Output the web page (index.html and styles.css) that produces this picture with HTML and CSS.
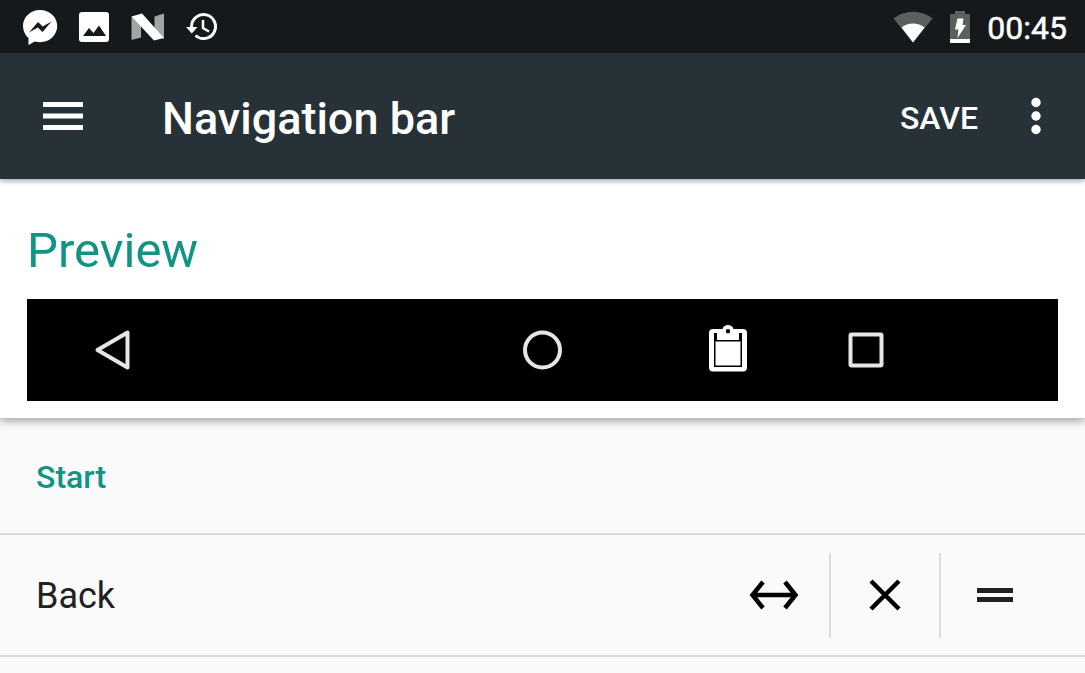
FILE: index.html
```
<!DOCTYPE html>
<html lang="en">
<head>
<meta charset="utf-8">
<meta name="viewport" content="width=device-width, initial-scale=1">
<title>Navigation bar</title>
<link rel="stylesheet" href="styles.css">
</head>
<body>
<div class="status-bar">
  <div class="notifications">
    <svg class="status-icon" viewBox="0 0 36 36" aria-hidden="true">
      <path fill="#fff" d="M18 1C8.300 1 1 8 1 17c0 5 2.200 9.200 5.500 12V36l6.300-3.500c1.700.5 3.400.7 5.200.7 9.700 0 17.200-7.200 17.200-16.200S27.700 1 18 1z"/>
      <path fill="#15191c" d="M7 23.500l9-10.500 4.700 4.500 8.800-5-9 10.500-4.700-4.500z"/>
    </svg>
    <svg class="status-icon" viewBox="0 0 36 36" aria-hidden="true">
      <rect x="3" y="3" width="30" height="30" rx="3" fill="#fff"/>
      <path fill="#15191c" d="M7 27l6-8 4.500 5 5.500-7.500L30 27z"/>
    </svg>
    <svg class="status-icon" viewBox="0 0 36 36" aria-hidden="true">
      <path fill="#a2a5a6" d="M1.500 7.500L11 13v15.500L1.500 31zM34 4.500V30l-9.500-7V7.500z"/>
      <path fill="#fff" d="M1.500 7.500L12 4.500l22 24.500-10 2.500z"/>
    </svg>
    <svg class="status-icon" viewBox="0 0 36 36" aria-hidden="true">
      <path fill="none" stroke="#fff" stroke-width="3" d="M7.500 19V17.500A12 12 0 1 1 11.500 26.500"/>
      <path fill="#fff" d="M2 18h11.500L7.800 24.500z"/>
      <path fill="none" stroke="#fff" stroke-width="2.500" d="M19 11v8l6 3.500"/>
    </svg>
  </div>
  <div class="system">
    <svg class="wifi" viewBox="0 0 40 32" aria-hidden="true">
      <path fill="#5c5f60" d="M20 31.500L.5 7.500C12-1.500 28-1.500 39.500 7.500z"/>
      <path fill="#fff" d="M20 31.500L8.500 16.500c6.500-5.500 16.500-5.500 23 0z"/>
    </svg>
    <svg class="battery" viewBox="0 0 22 32" aria-hidden="true">
      <path fill="#5c5f60" d="M6 0h10v3h5v25H1V3h5z"/>
      <path fill="#fff" d="M1 28h20v4H1zM8.500 7.500h6l-1 6.500H17L8.500 27l1-8.500H6z"/>
    </svg>
    <time class="clock">00:45</time>
  </div>
</div>

<header class="app-bar">
  <button class="menu-button" type="button" aria-label="Open menu">
    <svg width="40" height="28" viewBox="0 0 40 28" fill="#fff" aria-hidden="true"><path d="M0 0h40v5H0zM0 11.500h40v5H0zM0 23h40v5H0z"/></svg>
  </button>
  <h1 class="title">Navigation bar</h1>
  <button class="save" type="button">SAVE</button>
  <button class="overflow" type="button" aria-label="More options">
    <svg width="10" height="38" viewBox="0 0 10 38" fill="#fff" aria-hidden="true"><circle cx="5" cy="5.500" r="4.700"/><circle cx="5" cy="19" r="4.700"/><circle cx="5" cy="32.500" r="4.700"/></svg>
  </button>
</header>

<main>
  <section class="preview">
    <h2 class="preview-title">Preview</h2>
    <div class="nav-preview">
      <div class="nav-start">
        <span class="nav-key"><svg width="40" height="44" viewBox="0 0 40 44" aria-hidden="true"><path d="M34.500 4.500v35L4.500 22z" fill="none" stroke="#e6e6e6" stroke-width="4" stroke-linejoin="round"/></svg></span>
      </div>
      <span class="nav-key"><svg width="40" height="40" viewBox="0 0 40 40" aria-hidden="true"><circle cx="19.500" cy="20" r="17.500" fill="none" stroke="#e6e6e6" stroke-width="4"/></svg></span>
      <div class="nav-end">
        <span class="nav-key"><svg width="38" height="52" viewBox="0 0 38 52" aria-hidden="true">
          <path fill="#fff" fill-rule="evenodd" d="M4 5h9.500C14.500 2 16.500 1 19 1s4.500 1 5.500 4H34q4 0 4 4v34.500q0 4-4 4H4q-4 0-4-4V9q0-4 4-4zM5 9v34h28V9h-3v7H8V9zM19 5a2.200 2.200 0 1 0 0 4.400A2.200 2.200 0 0 0 19 5z"/>
          <path fill="#fff" d="M6.500 17.500h25v24h-25z"/>
        </svg></span>
        <span class="nav-key"><svg width="36" height="36" viewBox="0 0 36 36" aria-hidden="true"><rect x="2.500" y="2.500" width="31" height="31" rx="1" fill="none" stroke="#e6e6e6" stroke-width="4"/></svg></span>
      </div>
    </div>
  </section>

  <section class="group">
    <h3 class="group-title">Start</h3>
    <ul class="items">
      <li class="item">
        <span class="item-name">Back</span>
        <button class="action" type="button" aria-label="Change width">
          <svg width="50" height="30" viewBox="0 0 50 30" fill="none" stroke="#000" stroke-width="4.500" aria-hidden="true"><path d="M4 15h42M14 2L3.500 15 14 28M36 2l10.500 13L36 28"/></svg>
        </button>
        <button class="action divided" type="button" aria-label="Remove">
          <svg width="32" height="32" viewBox="0 0 32 32" stroke="#000" stroke-width="4.500" aria-hidden="true"><path d="M2 2l28 28M30 2L2 30"/></svg>
        </button>
        <button class="action divided" type="button" aria-label="Reorder">
          <svg width="36" height="14" viewBox="0 0 36 14" fill="#212121" aria-hidden="true"><path d="M0 0h36v5H0zM0 9h36v5H0z"/></svg>
        </button>
      </li>
    </ul>
  </section>
</main>
</body>
</html>
```
FILE: styles.css
```
* {
  box-sizing: border-box;
}

body {
  margin: 0;
  background: #fafafa;
  color: #212121;
  font-family: Roboto, "Noto Sans", sans-serif;
}

h1, h2, h3, ul {
  margin: 0;
  padding: 0;
}

button {
  padding: 0;
  border: 0;
  background: none;
  color: inherit;
  font: inherit;
  cursor: pointer;
}

svg {
  display: block;
}

.status-bar {
  display: flex;
  justify-content: space-between;
  align-items: center;
  height: 53px;
  padding: 0 18px 0 22px;
  background: #15191c;
  color: #fff;
}

.notifications {
  display: flex;
  gap: 18px;
}

.status-icon {
  width: 36px;
  height: 36px;
}

.system {
  display: flex;
  align-items: center;
  gap: 16px;
}

.wifi {
  width: 40px;
  height: 32px;
}

.battery {
  width: 22px;
  height: 32px;
}

.clock {
  padding-top: 3px;
  font-size: 32px;
  font-weight: 400;
  line-height: 36px;
  -webkit-text-stroke: 0.5px currentColor;
}

.app-bar {
  position: relative;
  display: flex;
  align-items: center;
  height: 126px;
  padding: 0 44px 0 43px;
  background: #273238;
  color: #fff;
  box-shadow: 0 2px 5px rgba(0, 0, 0, 0.35);
}

.title {
  flex: 1;
  padding: 5px 0 0 79px;
  font-size: 45px;
  font-weight: 500;
  line-height: 52px;
}

.save {
  padding-top: 4px;
  font-size: 32px;
  font-weight: 500;
  line-height: 38px;
}

.overflow {
  margin-left: 53px;
}

.preview {
  padding: 44px 27px 17px;
  background: #fff;
  box-shadow: 0 3px 8px rgba(0, 0, 0, 0.35);
}

.preview-title {
  padding-bottom: 20px;
  color: #109483;
  font-size: 49px;
  font-weight: 400;
  line-height: 56px;
}

.nav-preview {
  display: grid;
  grid-template-columns: 1fr auto 1fr;
  align-items: center;
  height: 102px;
  background: #000;
}

.nav-key {
  display: flex;
  justify-content: center;
  align-items: center;
  width: 138px;
}

.nav-start {
  padding-left: 17px;
}

.nav-end {
  display: flex;
  padding-left: 47px;
}

.group-title {
  padding: 39px 36px 36px;
  color: #109483;
  font-size: 32px;
  font-weight: 500;
  line-height: 40px;
}

.items {
  border-top: 2px solid #dcdcdc;
  list-style: none;
}

.item {
  display: flex;
  align-items: center;
  height: 122px;
  padding: 0 36px;
  border-bottom: 2px solid #dcdcdc;
}

.item-name {
  flex: 1;
  padding-top: 2px;
  font-size: 36px;
  line-height: 44px;
}

.action {
  display: flex;
  justify-content: center;
  align-items: center;
  width: 110px;
  height: 85px;
}

.divided {
  border-left: 2px solid #dcdcdc;
}
```
